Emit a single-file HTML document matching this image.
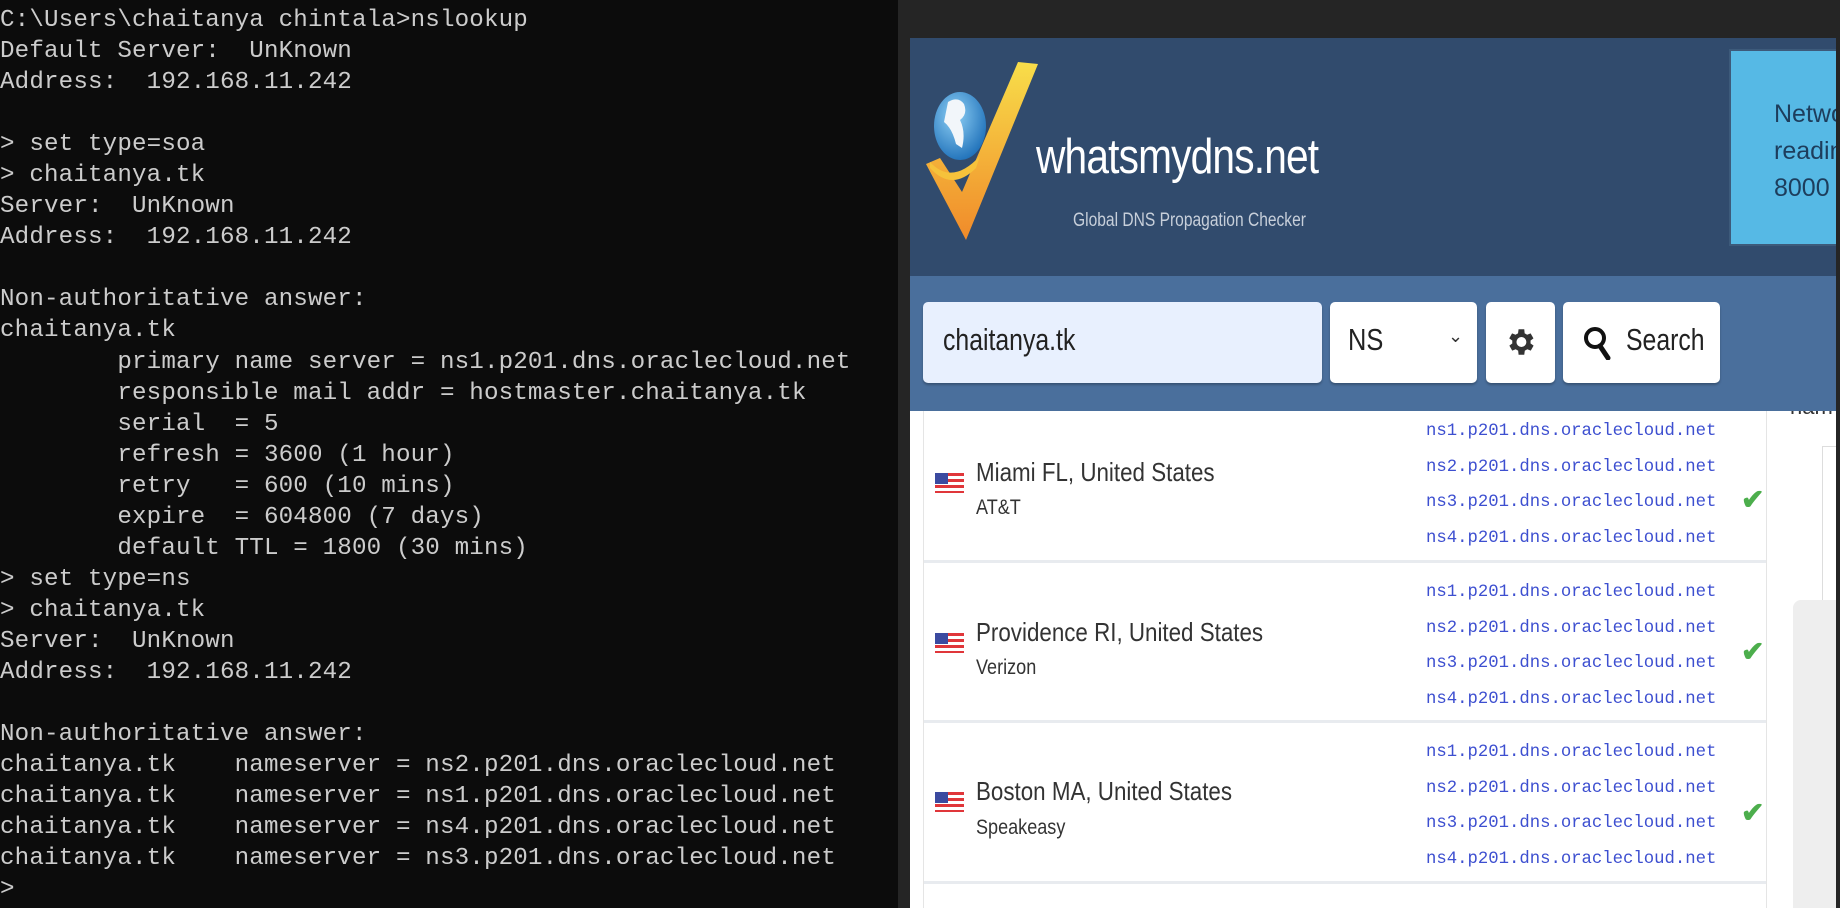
<!DOCTYPE html>
<html><head><meta charset="utf-8"><style>
*{margin:0;padding:0;box-sizing:border-box}
html,body{width:1840px;height:908px;overflow:hidden}
body{background:#252525;position:relative;font-family:"Liberation Sans",sans-serif}
#term{position:absolute;left:0;top:0;width:898px;height:908px;overflow:hidden;background:#0c0c0c;color:#cccccc;font-family:"Liberation Mono",monospace;font-size:24.2px;line-height:31.05px;padding-top:5px;white-space:pre;letter-spacing:0.15px}
#web{position:absolute;left:910px;top:38px;width:926px;height:870px;background:#fff;overflow:hidden}
#hdr{position:absolute;left:0;top:0;width:926px;height:238px;background:#314b6d}
#band{position:absolute;left:0;top:238px;width:926px;height:135px;background:#4a6f9c}
.box{position:absolute;top:264px;height:81px;background:#fff;border-radius:5px;box-shadow:0 2px 2px rgba(0,0,0,.25)}
.ad{position:absolute;left:819px;top:11px;width:110px;height:197px;background:#56b9e5;border:2px solid #3d5a7a;color:#1d3d5c;font-size:25px;line-height:37px;padding:45px 0 0 43px;white-space:pre;overflow:hidden}
.row{position:absolute;left:13px;width:843px;height:160px;border-bottom:3px solid #e8ebef;background:#fff}
.flag{position:absolute;left:12px;width:29px;height:20px;background:repeating-linear-gradient(#e0363a 0 3px,#fff 3px 6px)}
.flag:before{content:"";position:absolute;left:0;top:0;width:13px;height:11px;background:#3b4aa0}
.city{position:absolute;left:53px;font-size:26px;color:#333;transform:scaleX(.86);transform-origin:left}
.isp{position:absolute;left:53px;font-size:21px;color:#333;transform:scaleX(.86);transform-origin:left}
.ns{position:absolute;left:503px;font-family:"Liberation Mono",monospace;font-size:17.3px;color:#3d4fd0;line-height:35.5px;white-space:pre}
.ck{position:absolute;left:818px;color:#4cae4c;font-size:28px;font-weight:bold}
</style></head><body>
<div id="term">C:\Users\chaitanya chintala&gt;nslookup
Default Server:  UnKnown
Address:  192.168.11.242

&gt; set type=soa
&gt; chaitanya.tk
Server:  UnKnown
Address:  192.168.11.242

Non-authoritative answer:
chaitanya.tk
        primary name server = ns1.p201.dns.oraclecloud.net
        responsible mail addr = hostmaster.chaitanya.tk
        serial  = 5
        refresh = 3600 (1 hour)
        retry   = 600 (10 mins)
        expire  = 604800 (7 days)
        default TTL = 1800 (30 mins)
&gt; set type=ns
&gt; chaitanya.tk
Server:  UnKnown
Address:  192.168.11.242

Non-authoritative answer:
chaitanya.tk    nameserver = ns2.p201.dns.oraclecloud.net
chaitanya.tk    nameserver = ns1.p201.dns.oraclecloud.net
chaitanya.tk    nameserver = ns4.p201.dns.oraclecloud.net
chaitanya.tk    nameserver = ns3.p201.dns.oraclecloud.net
&gt;</div>
<div id="web">
 <div class="row" style="top:365px"><div class="flag" style="top:70px"></div><div class="city" style="top:54px">Miami FL, United States</div><div class="isp" style="top:93px">AT&amp;T</div>
  <div class="ns" style="top:11px">ns1.p201.dns.oraclecloud.net
ns2.p201.dns.oraclecloud.net
ns3.p201.dns.oraclecloud.net
ns4.p201.dns.oraclecloud.net</div><div class="ck" style="top:80px">✔</div></div>
 <div class="row" style="top:525px"><div class="flag" style="top:70px"></div><div class="city" style="top:54px">Providence RI, United States</div><div class="isp" style="top:93px">Verizon</div>
  <div class="ns" style="top:12px">ns1.p201.dns.oraclecloud.net
ns2.p201.dns.oraclecloud.net
ns3.p201.dns.oraclecloud.net
ns4.p201.dns.oraclecloud.net</div><div class="ck" style="top:72px">✔</div></div>
 <div class="row" style="top:686px"><div class="flag" style="top:68px"></div><div class="city" style="top:52px">Boston MA, United States</div><div class="isp" style="top:92px">Speakeasy</div>
  <div class="ns" style="top:11px">ns1.p201.dns.oraclecloud.net
ns2.p201.dns.oraclecloud.net
ns3.p201.dns.oraclecloud.net
ns4.p201.dns.oraclecloud.net</div><div class="ck" style="top:72px">✔</div></div>
 <div class="row" style="top:846px;height:24px;border:0"></div>
 <div style="position:absolute;left:13px;top:373px;width:1px;height:497px;background:#e5e5e5"></div>
 <div style="position:absolute;left:856px;top:373px;width:1px;height:497px;background:#e5e5e5"></div>
 <div style="position:absolute;left:912px;top:408px;width:20px;height:172px;border:1px solid #ddd;border-right:0"></div>
 <div style="position:absolute;left:883px;top:562px;width:50px;height:308px;background:#eee;border-radius:8px 0 0 0"></div>
 <div style="position:absolute;left:880px;top:356px;font-size:22px;color:#333">nam</div>
 <div id="hdr">
  <svg style="position:absolute;left:10px;top:20px" width="120" height="190" viewBox="0 0 120 190">
   <defs><linearGradient id="g" x1="0" y1="0" x2="0" y2="1"><stop offset="0" stop-color="#f8de4a"/><stop offset="1" stop-color="#f08a2a"/></linearGradient>
   <radialGradient id="gl" cx=".4" cy=".35" r=".7"><stop offset="0" stop-color="#8fd0f5"/><stop offset="1" stop-color="#1d6fb8"/></radialGradient></defs>
   <path d="M98 4 L118 6 L46 182 L6 106 L20 100 L42 134 Z" fill="url(#g)"/>
   <ellipse cx="40" cy="68" rx="26" ry="34" fill="url(#gl)"/>
   <path d="M28 44 q10-6 16 2 q4 10 -4 16 q6 12 2 28 l-6-4 q-4-16 -12-22 z" fill="#f2f6fa"/>
   <path d="M10 104 q22 24 50 -6 l-4 12 q-24 24 -46 0 z" fill="#f6c23b"/>
  </svg>
  <div style="position:absolute;left:126px;top:91px;font-size:49px;color:#fff;letter-spacing:-1px;transform:scaleX(.83);transform-origin:left;font-weight:300">whatsmydns.net</div>
  <div style="position:absolute;left:163px;top:172px;font-size:19px;color:#c7cfda;transform:scaleX(.82);transform-origin:left">Global DNS Propagation Checker</div>
  <div class="ad">Network
reading
8000</div>
 </div>
 <div id="band"></div>
 <div class="box" style="left:13px;width:399px;background:#e8f0fe"><div style="position:absolute;left:20px;top:20px;font-size:31px;color:#222;transform:scaleX(.8);transform-origin:left">chaitanya.tk</div></div>
 <div class="box" style="left:420px;width:147px"><div style="position:absolute;left:18px;top:20px;font-size:31px;color:#222;transform:scaleX(.82);transform-origin:left">NS</div><div style="position:absolute;left:118px;top:24px;font-size:18px;color:#333">⌄</div></div>
 <div class="box" style="left:576px;width:69px"><svg style="position:absolute;left:17px;top:22px" width="34" height="36" viewBox="0 0 24 24"><path fill="#333" d="M19.4 13a7.5 7.5 0 0 0 0-2l2.1-1.6-2-3.5-2.5 1a7 7 0 0 0-1.7-1L15 3h-4l-.4 2.9a7 7 0 0 0-1.7 1l-2.5-1-2 3.5L6.6 11a7.5 7.5 0 0 0 0 2l-2.1 1.6 2 3.5 2.5-1a7 7 0 0 0 1.7 1L11 21h4l.4-2.9a7 7 0 0 0 1.7-1l2.5 1 2-3.5zM13 15.5a3.5 3.5 0 1 1 0-7 3.5 3.5 0 0 1 0 7z"/></svg></div>
 <div class="box" style="left:653px;width:157px"><svg style="position:absolute;left:20px;top:24px" width="30" height="34" viewBox="0 0 30 34"><circle cx="12" cy="12" r="9" stroke="#111" stroke-width="4" fill="none"/><path d="M17 20 L25 32" stroke="#111" stroke-width="5" stroke-linecap="round"/></svg><div style="position:absolute;left:63px;top:20px;font-size:31px;color:#222;transform:scaleX(.8);transform-origin:left">Search</div></div>
</div>
</body></html>
